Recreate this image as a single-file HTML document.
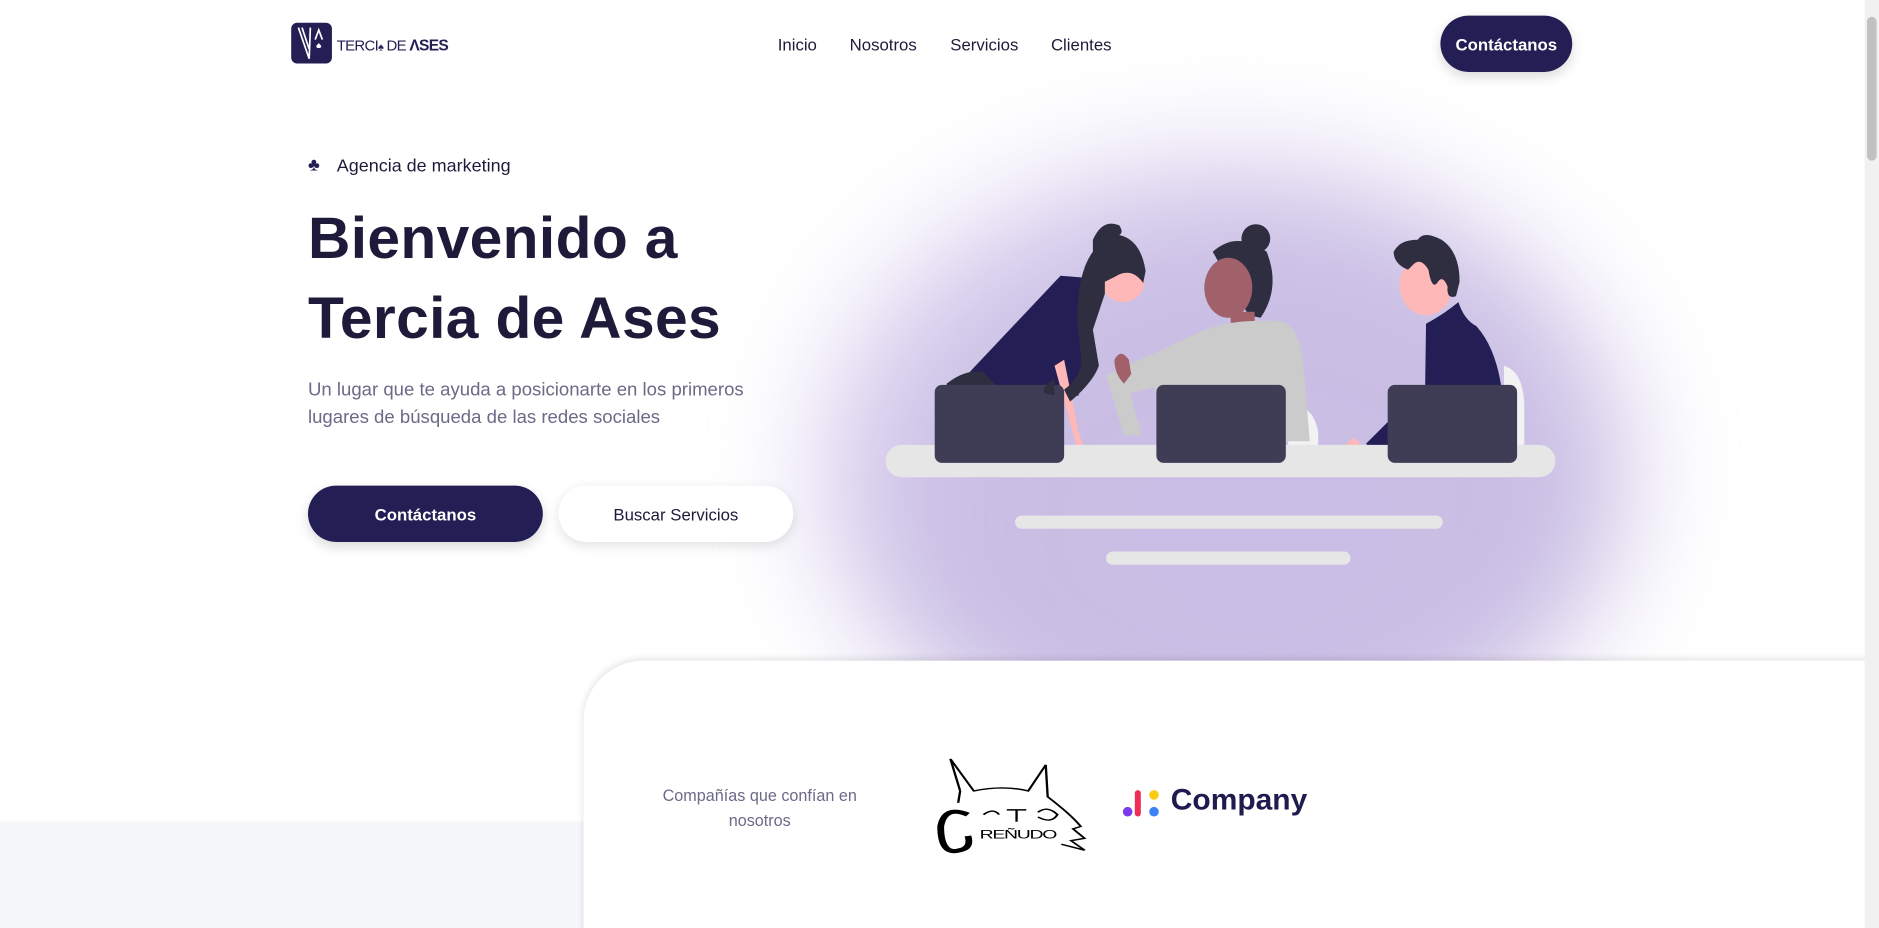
<!DOCTYPE html>
<html><head><meta charset="utf-8"><style>
html,body{margin:0;padding:0;overflow:hidden;background:#fff;}
body{width:1879px;height:928px;position:relative;font-family:"Liberation Sans",sans-serif;}
#w{position:absolute;left:0;top:0;width:1568px;height:774px;transform:scale(1.19834,1.199);transform-origin:0 0;color:#1e1b3a;overflow:hidden;}
.a{position:absolute;}
.nav a{position:absolute;top:29px;font-size:14px;color:#1e1b3a;text-decoration:none;}
.btn{position:absolute;border-radius:24px;font-size:14px;font-weight:bold;display:flex;align-items:center;justify-content:center;}
</style></head><body><div id="w">
<div class="a" style="left:0;top:685px;width:1556px;height:89px;background:#f6f7fb"></div>
<div class="a" style="left:680px;top:130px;width:680px;height:520px;border-radius:50%;background:radial-gradient(ellipse at 55% 60%,#cbbfe8 0%,#c9bde3 50%,rgba(210,200,238,.7) 75%,rgba(255,255,255,0) 100%);filter:blur(45px)"></div>
<!-- logo -->
<div class="a" style="left:243px;top:19px;width:34px;height:34px;background:#231e54;border-radius:5px"></div>
<svg class="a" style="left:243px;top:19px" width="34" height="34" viewBox="0 0 34 34"><path d="M6 4 L15 30 L16 4 M9 4 L15 22 M20 14 L23 6 L26 14" stroke="#fff" stroke-width="1.4" fill="none"/><path d="M23 17 c-2 2-3 3-1 4 h2 c2-1 1-2-1-4z" fill="#fff"/></svg>
<div class="a" style="left:281px;top:30px;font-size:12.5px;letter-spacing:-0.6px;color:#231e54">TERCI<span style="font-size:9px">♠</span> DE <b style="font-size:13px">ΛSES</b></div>
<div class="nav"><a style="left:649px">Inicio</a><a style="left:709px">Nosotros</a><a style="left:793px">Servicios</a><a style="left:877px">Clientes</a></div>
<div class="btn" style="left:1202px;top:13px;width:110px;height:47px;background:#231e54;color:#fff;box-shadow:0 4px 10px rgba(0,0,0,.15)">Contáctanos</div>
<!-- hero -->
<div class="a" style="left:257px;top:129px;font-size:15px;color:#231e54">♣</div>
<div class="a" style="left:281px;top:130px;font-size:15px;color:#1e1b3a">Agencia de marketing</div>
<div class="a" style="left:257px;top:166px;font-size:49px;font-weight:bold;line-height:67px;color:#1e1b3a;letter-spacing:0.3px">Bienvenido a<br>Tercia de Ases</div>
<div class="a" style="left:257px;top:314px;font-size:15.5px;line-height:23px;color:#6b6a87">Un lugar que te ayuda a posicionarte en los primeros<br>lugares de búsqueda de las redes sociales</div>
<div class="btn" style="left:257px;top:405px;width:196px;height:47px;background:#231e54;color:#fff;box-shadow:0 4px 10px rgba(0,0,0,.15)">Contáctanos</div>
<div class="btn" style="left:466px;top:405px;width:196px;height:47px;background:#fff;color:#1e1b3a;font-weight:normal;box-shadow:0 3px 10px rgba(0,0,0,.12)">Buscar Servicios</div>
<!-- illustration -->
<svg class="a" style="left:0;top:0" width="1568" height="774" viewBox="0 0 1568 774">
<rect x="847" y="430" width="357" height="11" rx="5.5" fill="#e6e6e6"/>
<rect x="923" y="460" width="204" height="11" rx="5.5" fill="#e6e6e6"/>
<path d="M1075 340 q20-5 25 20 v20 h-25z" fill="#f2f2f2"/>
<path d="M1255 305 q18 5 17 40 v30 h-17z" fill="#f2f2f2"/>
<path d="M885 230 L910 232 L915 250 L900 330 L830 330 L800 320 Z" fill="#231e54"/>
<path d="M790 320 q15-12 30-10 l15 15 h-45z" fill="#2f2e41"/>
<path d="M888 300 l12 60 l5 15 q15 0 25 5 q0 8-22 6 q-8-2-10-15 l-18-66z" fill="#feb8b8"/>
<ellipse cx="937" cy="235" rx="18" ry="17" fill="#feb8b8"/>
<path d="M912 200 q8-18 22-12 q4 6 0 8 q18 4 22 30 l-2 10 q-10-14-24-5 l-8 4 v10 l-10 30 l5 30 q-5 14-24 30 l-5-10 q16-12 14-28 l-3-30 q0-40 13-57z" fill="#2f2e41"/>
<circle cx="1048" cy="199" r="12" fill="#2f2e41"/>
<path d="M1012 210 q20-18 45 0 q12 30-5 55 l-10-2 z" fill="#2f2e41"/>
<ellipse cx="1025" cy="240" rx="20" ry="25" fill="#a0616a"/>
<path d="M1027 260 h20 v10 h-20z" fill="#a0616a"/>
<path d="M995 280 q25-15 75-12 q15 5 18 40 l5 60 h-120 l-10-45 l-20 5 l10 35 h-15 l-15-50z" fill="#cbcbcb"/>
<path d="M930 300 q5-10 12 0 l2 12 l-6 8 q-8-8-8-20z" fill="#a0616a"/>
<ellipse cx="1190" cy="238" rx="22" ry="25" fill="#feb8b8"/>
<path d="M1163 210 q5-10 20-10 q5-8 20 0 q15 10 15 35 l-3 12 q-8 3-7-8 q-4-10-8-4 q-5 8-8-10 q-6-10-12-5 l-5 5 q-12-5-12-15z" fill="#2f2e41"/>
<path d="M1190 270 q15-8 27-18 q5 15 15 20 q18 20 22 60 l5 40 h-60 l-10-30z" fill="#231e54"/>
<path d="M1180 330 l-40 40 l8 10 l40-35z" fill="#231e54"/>
<path d="M1130 365 l12 12 q-10 12-22 10 q-8-5 0-14z" fill="#feb8b8"/>
<rect x="739" y="371" width="559" height="27" rx="13.5" fill="#e6e6e6"/>
<rect x="780" y="321" width="108" height="65" rx="6" fill="#3f3d56"/>
<rect x="965" y="321" width="108" height="65" rx="6" fill="#3f3d56"/>
<rect x="1158" y="321" width="108" height="65" rx="6" fill="#3f3d56"/>
<path d="M880 316 q-12 8-8 12 l8 2z" fill="#2f2e41"/>
</svg>
<!-- card -->
<div class="a" style="left:487px;top:551px;width:1100px;height:260px;background:#fff;border-top-left-radius:50px;box-shadow:0 -1px 6px rgba(0,0,0,.12)"></div>
<div class="a" style="left:540px;top:653px;width:188px;text-align:center;font-size:13.5px;line-height:21px;color:#6b6a87">Compañías que confían en nosotros</div>
<svg class="a" style="left:772px;top:630px" width="138" height="84" viewBox="0 0 85 85" preserveAspectRatio="none" fill="none" stroke="#000" stroke-width="1.2">
<path d="M18 30 L13 3 L25 30 Q40 25 53 30 L62 8 L63 35 Q75 50 80 60 L76 62 L82 70 L75 72 L82 80 L70 75"/>
<path d="M18 30 L17 40"/>
<path d="M22 50 q-12-8-14 10 q0 25 10 20 q6-2 4-12" stroke-width="3.5"/>
<path d="M30 50 q5-6 8 0 M42 46 h10 M47 46 v10 M58 48 q5-6 10 2 q-3 8-10 2"/>
<text x="28" y="70" font-size="10" fill="#000" stroke="none" font-family="Liberation Sans" textLength="40">REÑUDO</text>
</svg>
<svg class="a" style="left:937px;top:656px" width="32" height="28"><circle cx="4" cy="21" r="4" fill="#7c3aed"/><rect x="10" y="3" width="5" height="22" rx="2.5" fill="#ef2d56"/><circle cx="26" cy="7" r="4" fill="#facc15"/><circle cx="26" cy="21" r="4" fill="#3b82f6"/></svg>
<div class="a" style="left:977px;top:653px;font-size:25px;font-weight:bold;color:#1e1b4f">Company</div>
<div class="a" style="left:1556px;top:0;width:12px;height:774px;background:#f1f1f1"></div>
<div class="a" style="left:1558px;top:14px;width:8px;height:120px;background:#c1c1c1;border-radius:4px"></div>
</div></body></html>
